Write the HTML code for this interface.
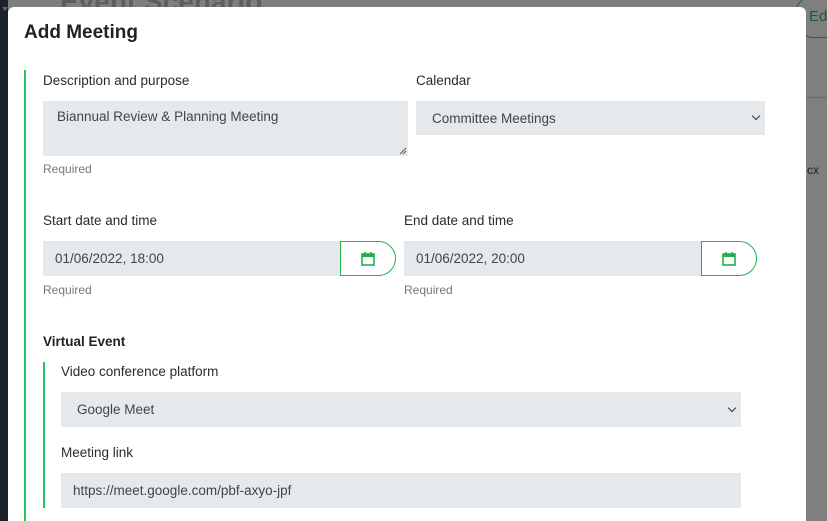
<!DOCTYPE html>
<html><head><style>
*{box-sizing:border-box;margin:0;padding:0}
html,body{width:827px;height:521px;overflow:hidden}
body{background:#7f7f7f;font-family:"Liberation Sans",sans-serif;position:relative;color:#222}
.abs{position:absolute}
.lbl{position:absolute;font-size:13.5px;color:#2a2a2a;white-space:nowrap}
.req{position:absolute;font-size:12px;color:#777}
.inp{position:absolute;background:#e6e9ec;font-size:13.5px;color:#444;padding-left:14px;display:flex;align-items:center;white-space:nowrap}
.btn{position:absolute;border:1px solid #1fb04f;border-radius:0 18px 18px 0;background:#fff;display:flex;align-items:center;justify-content:center}
.chev{position:absolute;width:6px;height:6px;border-right:1.6px solid #333;border-bottom:1.6px solid #333;transform:rotate(45deg)}
</style></head><body>
<div class="abs" style="left:0;top:0;width:8px;height:521px;background:#1c2227"></div>
<div class="abs" style="left:2px;top:7px;width:0;height:0;border-left:3px solid transparent;border-right:3px solid transparent;border-top:4px solid #666"></div>
<div class="abs" style="left:60px;top:-14px;font-size:28px;font-weight:bold;color:#222;opacity:.35">Event Scenario</div>
<div class="abs" style="left:795px;top:-4px;width:60px;height:42px;border:1px solid #1c6a3a;border-radius:18px 0 0 18px"></div>
<div class="abs" style="left:809px;top:8px;font-size:15px;color:#1c5a32">Ed</div>
<div class="abs" style="left:806px;top:97px;width:21px;height:1px;background:#6a6a6a"></div>
<div class="abs" style="left:807px;top:163px;font-size:12px;color:#222">cx</div>

<div class="abs" style="left:8px;top:7px;width:798px;height:514px;background:#fff;border-radius:6px 6px 0 0"></div>
<div class="abs" style="left:24px;top:22px;font-size:19px;font-weight:bold;color:#222">Add Meeting</div>
<div class="abs" style="left:24px;top:70px;width:2px;height:451px;background:#22c55e"></div>

<div class="lbl" style="left:43px;top:73px">Description and purpose</div>
<div class="inp" style="left:43px;top:101px;width:365px;height:55px;align-items:flex-start;padding-top:8px">Biannual Review &amp; Planning Meeting</div>
<svg class="abs" style="left:399px;top:147px" width="8" height="8"><path d="M1 7L7 1M4 7L7 4" stroke="#555" stroke-width="1"/></svg>
<div class="req" style="left:43px;top:162px">Required</div>
<div class="lbl" style="left:416px;top:73px">Calendar</div>
<div class="inp" style="left:416px;top:101px;width:349px;height:34px;padding-left:16px">Committee Meetings</div>
<div class="chev" style="left:753px;top:113px"></div>

<div class="lbl" style="left:43px;top:213px">Start date and time</div>
<div class="inp" style="left:43px;top:241px;width:298px;height:35px;padding-left:12px">01/06/2022, 18:00</div>
<div class="btn" style="left:340px;top:241px;width:56px;height:35px"><svg width="16" height="16" viewBox="0 0 16 16"><rect x="2" y="3" width="12" height="11" fill="none" stroke="#1fb04f" stroke-width="1.6"/><rect x="2" y="3" width="12" height="3" fill="#1fb04f"/><path d="M5 1v4M11 1v4" stroke="#1fb04f" stroke-width="1.6"/></svg></div>
<div class="req" style="left:43px;top:283px">Required</div>
<div class="lbl" style="left:404px;top:213px">End date and time</div>
<div class="inp" style="left:404px;top:241px;width:298px;height:35px;padding-left:12px">01/06/2022, 20:00</div>
<div class="btn" style="left:701px;top:241px;width:56px;height:35px"><svg width="16" height="16" viewBox="0 0 16 16"><rect x="2" y="3" width="12" height="11" fill="none" stroke="#1fb04f" stroke-width="1.6"/><rect x="2" y="3" width="12" height="3" fill="#1fb04f"/><path d="M5 1v4M11 1v4" stroke="#1fb04f" stroke-width="1.6"/></svg></div>
<div class="req" style="left:404px;top:283px">Required</div>

<div class="abs" style="left:43px;top:334px;font-size:13.5px;font-weight:bold;color:#222">Virtual Event</div>
<div class="abs" style="left:43px;top:362px;width:2px;height:146px;background:#22c55e"></div>
<div class="lbl" style="left:61px;top:364px">Video conference platform</div>
<div class="inp" style="left:61px;top:392px;width:680px;height:35px;padding-left:16px">Google Meet</div>
<div class="chev" style="left:729px;top:405px"></div>
<div class="lbl" style="left:61px;top:445px">Meeting link</div>
<div class="inp" style="left:61px;top:473px;width:680px;height:35px;padding-left:12px">https://meet.google.com/pbf-axyo-jpf</div>
</body></html>
